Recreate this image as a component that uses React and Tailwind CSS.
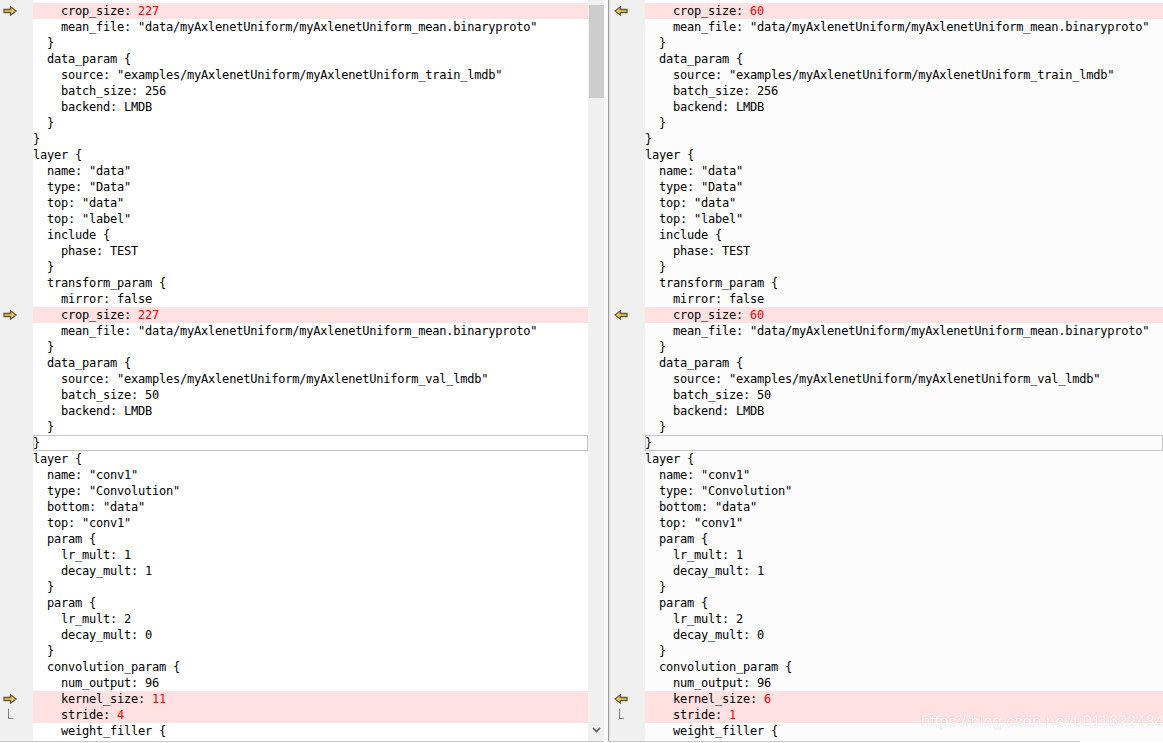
import React from 'react'

// rows shared by both panes; `d` marks a changed row, `a`/`b` are the left/right values
const rows = [
    { t: '    crop_size: ', a: '227', b: '60', d: 'arrow' },
    { t: '    mean_file: "data/myAxlenetUniform/myAxlenetUniform_mean.binaryproto"' },
    { t: '  }' },
    { t: '  data_param {' },
    { t: '    source: "examples/myAxlenetUniform/myAxlenetUniform_train_lmdb"' },
    { t: '    batch_size: 256' },
    { t: '    backend: LMDB' },
    { t: '  }' },
    { t: '}' },
    { t: 'layer {' },
    { t: '  name: "data"' },
    { t: '  type: "Data"' },
    { t: '  top: "data"' },
    { t: '  top: "label"' },
    { t: '  include {' },
    { t: '    phase: TEST' },
    { t: '  }' },
    { t: '  transform_param {' },
    { t: '    mirror: false' },
    { t: '    crop_size: ', a: '227', b: '60', d: 'arrow' },
    { t: '    mean_file: "data/myAxlenetUniform/myAxlenetUniform_mean.binaryproto"' },
    { t: '  }' },
    { t: '  data_param {' },
    { t: '    source: "examples/myAxlenetUniform/myAxlenetUniform_val_lmdb"' },
    { t: '    batch_size: 50' },
    { t: '    backend: LMDB' },
    { t: '  }' },
    { t: '}', cur: true },
    { t: 'layer {' },
    { t: '  name: "conv1"' },
    { t: '  type: "Convolution"' },
    { t: '  bottom: "data"' },
    { t: '  top: "conv1"' },
    { t: '  param {' },
    { t: '    lr_mult: 1' },
    { t: '    decay_mult: 1' },
    { t: '  }' },
    { t: '  param {' },
    { t: '    lr_mult: 2' },
    { t: '    decay_mult: 0' },
    { t: '  }' },
    { t: '  convolution_param {' },
    { t: '    num_output: 96' },
    { t: '    kernel_size: ', a: '11', b: '6', d: 'arrow' },
    { t: '    stride: ', a: '4', b: '1', d: 'cont' },
    { t: '    weight_filler {' },
]

const mono = { fontFamily: '"DejaVu Sans Mono", "Liberation Mono", monospace' }

function Arrow({ dir }) {
    const d = dir === 'right'
        ? 'M1 3.5 H7.5 V0.8 L13 5 L7.5 9.2 V6.5 H1 Z'
        : 'M13 3.5 H6.5 V0.8 L1 5 L6.5 9.2 V6.5 H13 Z'
    return (
        <svg width="14" height="10" viewBox="0 0 14 10">
            <path d={d} fill="#f6cf45" stroke="#5f5848" strokeWidth="1.3" strokeLinejoin="miter" />
        </svg>
    )
}

function Cont() {
    return <div className="w-[5px] h-[10px] border-l border-b border-[#808080] -mt-[2px]" />
}

function Pane({ side }) {
    const gutter = side === 'left' ? 'w-[33px]' : 'w-[35px]'
    const textBg = side === 'left' ? 'bg-white' : 'bg-[#fcfcfc]'
    return (
        <div className="flex flex-1 min-w-0 h-full">
            <div className={`${gutter} shrink-0 bg-[#f0f0f0] pt-[3px]`}>
                {rows.map((r, i) => (
                    <div key={i} className={`h-4 flex items-center ${side === 'left' ? 'pl-[3px]' : 'pl-[4px]'}`}>
                        {r.d === 'arrow' && <Arrow dir={side === 'left' ? 'right' : 'left'} />}
                        {r.d === 'cont' && <div className="ml-[5px]"><Cont /></div>}
                    </div>
                ))}
            </div>
            <div className={`flex-1 min-w-0 pt-[3px] ${textBg} overflow-hidden`} style={mono}>
                {rows.map((r, i) => (
                    <div
                        key={i}
                        className={`h-4 leading-4 whitespace-pre text-[12px] tracking-[-0.22px] text-black ${r.d ? 'bg-[#ffe1e1]' : ''} ${r.cur ? 'shadow-[inset_0_0_0_1px_#c3c3c3]' : ''}`}
                    >
                        {r.t}
                        {r.a && <span className="text-[#ff0000]">{side === 'left' ? r.a : r.b}</span>}
                    </div>
                ))}
            </div>
        </div>
    )
}

function Scrollbar() {
    return (
        <div className="w-4 shrink-0 h-full bg-[#f0f0f0] flex flex-col items-center pt-[5px] pb-[5px]">
            <div className="w-[15px] ml-[1px] h-[93px] bg-[#cdcdcd]" />
            <div className="flex-1" />
            <svg width="9" height="6" viewBox="0 0 9 6" className="mb-[3px]">
                <path d="M1 1 L4.5 4.5 L8 1" fill="none" stroke="#606060" strokeWidth="1.6" />
            </svg>
        </div>
    )
}

export default function App() {
    return (
        <div className="w-[1163px] h-[743px] overflow-hidden bg-white relative">
            <div className="flex h-[741px]">
                <div className="w-[588px] shrink-0 h-full">
                    <Pane side="left" />
                </div>
                <Scrollbar />
                <div className="w-[4px] shrink-0 bg-[#f9f9f9]" />
                <div className="w-[2px] shrink-0 bg-[#a0a0a0] border-r border-[#dcdcdc]" />
                <div className="flex-1 min-w-0 h-full">
                    <Pane side="right" />
                </div>
            </div>
            <div className="flex h-[2px]">
                <div className="w-[604px] border-t border-[#c8c8c8]" />
                <div className="w-[5px]" />
                <div className="w-[471px] border-t border-[#c8c8c8]" />
            </div>
            <div
                className="absolute left-[921px] top-[709px] text-[16.5px] text-white/90 [text-shadow:0_0_1px_rgba(0,0,0,0.2)] whitespace-nowrap"
                style={{ fontFamily: '"Liberation Sans", Arial, sans-serif' }}
            >
                https://blog.csdn.net/u011622434
            </div>
        </div>
    )
}
